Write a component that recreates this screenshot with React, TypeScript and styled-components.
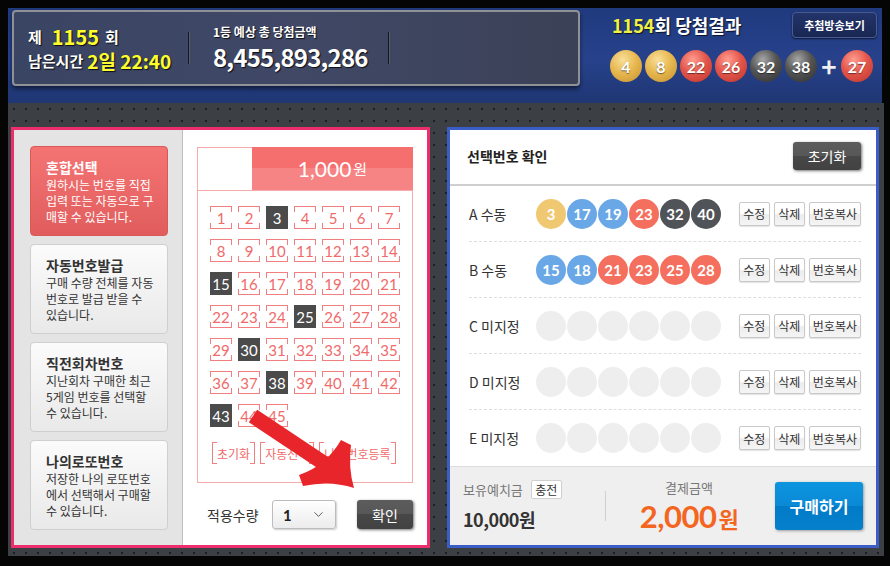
import React from 'react';
import styled, { createGlobalStyle, css } from 'styled-components';
import { ChevronDown } from 'lucide-react';

const KR = `"Noto Sans CJK KR", "Noto Sans", sans-serif`;
const NUM = `Lato, "Noto Sans CJK KR", sans-serif`;

const GlobalStyle = createGlobalStyle`
  html, body {
    margin: 0;
    padding: 0;
    background: #000;
  }
  body {
    font-family: ${KR};
  }
  * {
    box-sizing: border-box;
  }
`;

const Page = styled.div`
  position: relative;
  width: 890px;
  height: 566px;
  background: #050505;
  padding: 8px 0 0 8px;
  overflow: hidden;
`;

/* ---------- top blue band ---------- */

const TopBand = styled.div`
  width: 874px;
  height: 95px;
  display: flex;
  background: linear-gradient(180deg, #203a7e 0%, #27428b 55%, #1f3673 100%);
`;

const InfoPanel = styled.div`
  margin: 2px 0 0 4px;
  width: 568px;
  height: 76px;
  border: 2px solid #8f9194;
  border-radius: 4px;
  background: linear-gradient(90deg, #3a4463 0%, #404866 50%, #3b4156 100%);
  box-shadow: 0 3px 4px rgba(0, 0, 0, 0.5);
  display: flex;
  align-items: center;
  padding-left: 14px;
  color: #fff;
  text-shadow: 1px 1px 1px rgba(0, 0, 0, 0.8);
`;

const RoundBlock = styled.div`
  width: 160px;
  display: flex;
  flex-direction: column;
`;

const InfoLine = styled.div`
  height: 24px;
  display: flex;
  align-items: center;
  font-size: 15px;
  font-weight: 700;
  white-space: nowrap;
`;

const Yellow = styled.span<{ $size: number; $gap?: number }>`
  color: #ffff2e;
  font-size: ${(p) => p.$size}px;
  font-weight: 700;
  margin: 0 6px 0 ${(p) => p.$gap ?? 8}px;
`;

const VDivider = styled.div`
  width: 1px;
  height: 32px;
  background: #15171c;
  box-shadow: 1px 0 0 rgba(255, 255, 255, 0.12);
`;

const PrizeBlock = styled.div`
  width: 199px;
  padding-left: 24px;
  display: flex;
  flex-direction: column;
`;

const PrizeLabel = styled.div`
  font-size: 12px;
  font-weight: 700;
  line-height: 18px;
  white-space: nowrap;
`;

const PrizeAmount = styled.div`
  font-size: 24px;
  font-weight: 700;
  line-height: 32px;
  letter-spacing: -0.8px;
  white-space: nowrap;
`;

const ResultArea = styled.div`
  flex: 1;
  padding: 4px 5px 0 30px;
  display: flex;
  flex-direction: column;
`;

const ResultHead = styled.div`
  display: flex;
  align-items: center;
  justify-content: space-between;
  height: 26px;
`;

const ResultTitle = styled.div`
  font-size: 18px;
  font-weight: 700;
  color: #fff;
  padding-left: 2px;
  text-shadow: 1px 1px 1px rgba(0, 0, 0, 0.7);
  span {
    color: #f0f045;
  }
`;

const BroadcastButton = styled.div`
  width: 85px;
  height: 26px;
  border-radius: 4px;
  border: 1px solid #4a5a92;
  background: linear-gradient(#22336a, #192752);
  box-shadow: 0 1px 2px rgba(0, 0, 0, 0.6);
  color: #fff;
  font-size: 11px;
  font-weight: 700;
  display: flex;
  align-items: center;
  justify-content: center;
`;

const WinBalls = styled.div`
  margin-top: 12px;
  display: flex;
  align-items: center;
  gap: 3px;
`;

type Tone = 'gold' | 'red' | 'dark' | 'blue' | 'empty';

const glossy: Record<string, string> = {
  gold: 'radial-gradient(circle at 40% 30%, #f8df9a 0%, #e8b850 45%, #c4912e 100%)',
  red: 'radial-gradient(circle at 40% 30%, #ff9d90 0%, #e4564b 45%, #bb342d 100%)',
  dark: 'radial-gradient(circle at 40% 30%, #a6a6a6 0%, #555 45%, #2e2e2e 100%)',
};

const WinBall = styled.div<{ $tone: Tone }>`
  width: 32px;
  height: 32px;
  border-radius: 50%;
  background: ${(p) => glossy[p.$tone]};
  color: #fff;
  font-family: ${NUM};
  font-weight: 700;
  font-size: 16px;
  display: flex;
  align-items: center;
  justify-content: center;
  text-shadow: 0 1px 1px rgba(0, 0, 0, 0.5);
`;

const Plus = styled.div`
  width: 16px;
  color: #f0f0f0;
  font-size: 26px;
  font-weight: 700;
  line-height: 32px;
  text-align: center;
  margin: 0 1px;
`;

/* ---------- dotted work area ---------- */

const WorkArea = styled.div`
  width: 876px;
  height: 453px;
  background-color: #3c3f44;
  background-image: radial-gradient(circle, #1d1f22 1px, transparent 1.6px);
  background-size: 12px 12px;
  padding: 24px 0 0 3px;
  display: flex;
  gap: 17px;
`;

const PickPanel = styled.div`
  width: 419px;
  height: 421px;
  border: 3px solid #ec2f6c;
  display: flex;
  background: #fff;
`;

const SideMenu = styled.div`
  width: 169px;
  background: #e4e4e4;
  border-right: 1px solid #bdbdbd;
  padding: 16px 0 0 16px;
  display: flex;
  flex-direction: column;
  gap: 8px;
`;

const MenuCard = styled.div<{ $active?: boolean }>`
  width: 138px;
  height: 90px;
  border-radius: 4px;
  padding: 10px 0 0 15px;
  border: 1px solid #cfcfcf;
  background: linear-gradient(#fbfbfb, #e9e9e9);
  color: #333;
  ${(p) =>
    p.$active &&
    css`
      border-color: #d95858;
      background: linear-gradient(#f47474, #e15d5d);
      color: #fff;
    `}
`;

const MenuTitle = styled.div`
  font-size: 14px;
  font-weight: 700;
  line-height: 20px;
`;

const MenuDesc = styled.div`
  font-size: 12px;
  line-height: 16px;
  white-space: nowrap;
`;

const PickBody = styled.div`
  flex: 1;
  padding: 17px 14px 0 14px;
  display: flex;
  flex-direction: column;
`;

const NumberBoard = styled.div`
  width: 216px;
  height: 336px;
  border: 1px solid #f6aaaa;
  display: flex;
  flex-direction: column;
`;

const BoardHead = styled.div`
  height: 43px;
  display: flex;
  border-bottom: 1px solid #f6aaaa;
`;

const BoardBlank = styled.div`
  width: 54px;
`;

const Price = styled.div`
  flex: 1;
  margin: -1px -1px 0 0;
  background: linear-gradient(#f56f6f 0%, #f56f6f 50%, #f78484 50%, #f78484 100%);
  color: #fff;
  display: flex;
  align-items: center;
  justify-content: center;
  font-family: ${NUM};
  font-size: 21px;
  span {
    font-family: ${KR};
    font-size: 15px;
    margin-left: 2px;
  }
`;

const Grid = styled.div`
  padding: 15px 0 0 12px;
  display: grid;
  grid-template-columns: repeat(7, 22px);
  grid-auto-rows: 23px;
  column-gap: 6px;
  row-gap: 10px;
`;

const pinkLine = '#f27f7f';

const NumCell = styled.div<{ $on?: boolean }>`
  display: flex;
  align-items: center;
  justify-content: center;
  font-family: ${NUM};
  font-size: 15px;
  color: #f06a6a;
  border-top: 1px solid ${pinkLine};
  border-bottom: 1px solid ${pinkLine};
  background:
    linear-gradient(${pinkLine}, ${pinkLine}) left top / 1px 5px no-repeat,
    linear-gradient(${pinkLine}, ${pinkLine}) right top / 1px 5px no-repeat,
    linear-gradient(${pinkLine}, ${pinkLine}) left bottom / 1px 5px no-repeat,
    linear-gradient(${pinkLine}, ${pinkLine}) right bottom / 1px 5px no-repeat,
    #fff;
  ${(p) =>
    p.$on &&
    css`
      background: #4b4b4b;
      border-color: #4b4b4b;
      color: #fff;
    `}
`;

const BoardActions = styled.div`
  margin: 15px 0 0 14px;
  display: flex;
  gap: 5px;
`;

const BracketButton = styled.div`
  height: 22px;
  padding: 0 4px;
  display: flex;
  align-items: center;
  font-size: 12px;
  color: #f06a6a;
  border-left: 1px solid ${pinkLine};
  border-right: 1px solid ${pinkLine};
  background:
    linear-gradient(${pinkLine}, ${pinkLine}) left top / 4px 1px no-repeat,
    linear-gradient(${pinkLine}, ${pinkLine}) right top / 4px 1px no-repeat,
    linear-gradient(${pinkLine}, ${pinkLine}) left bottom / 4px 1px no-repeat,
    linear-gradient(${pinkLine}, ${pinkLine}) right bottom / 4px 1px no-repeat;
`;

const ApplyRow = styled.div`
  margin-top: 17px;
  height: 29px;
  display: flex;
  align-items: center;
  padding-left: 10px;
`;

const ApplyLabel = styled.div`
  width: 65px;
  font-size: 14px;
  color: #333;
`;

const Select = styled.div`
  width: 64px;
  height: 29px;
  border: 1px solid #bcbcbc;
  border-radius: 3px;
  background: linear-gradient(#fff, #ececec);
  box-shadow: 1px 1px 2px rgba(0, 0, 0, 0.2);
  display: flex;
  align-items: center;
  justify-content: space-between;
  padding: 0 9px 0 10px;
  font-family: ${NUM};
  font-weight: 700;
  font-size: 15px;
  color: #222;
`;

const DarkButton = styled.div<{ $w: number; $h: number }>`
  width: ${(p) => p.$w}px;
  height: ${(p) => p.$h}px;
  border-radius: 3px;
  background: linear-gradient(#5c5c5c 0%, #575757 50%, #474747 50%, #424242 100%);
  box-shadow: 1px 1px 3px rgba(0, 0, 0, 0.55);
  color: #fff;
  font-size: 14px;
  display: flex;
  align-items: center;
  justify-content: center;
`;

/* ---------- right panel ---------- */

const ConfirmPanel = styled.div`
  width: 432px;
  height: 421px;
  border: 3px solid #3b5ec6;
  background: #fff;
  display: flex;
  flex-direction: column;
`;

const ConfirmHead = styled.div`
  height: 56px;
  border-bottom: 2px solid #cfcfcf;
  display: flex;
  align-items: center;
  justify-content: space-between;
  padding: 0 15px 2px 17px;
`;

const ConfirmTitle = styled.div`
  font-size: 14px;
  font-weight: 700;
  color: #222;
`;

const Slots = styled.div`
  padding: 0 15px 0 19px;
`;

const Slot = styled.div`
  height: 56px;
  display: flex;
  align-items: center;
  border-bottom: 1px dashed #dedede;
  &:last-child {
    border-bottom: none;
  }
`;

const SlotLabel = styled.div`
  width: 67px;
  font-size: 14px;
  color: #333;
  white-space: nowrap;
`;

const SlotBalls = styled.div`
  display: flex;
  gap: 1px;
`;

const flat: Record<string, string> = {
  gold: '#f1c872',
  blue: '#69a7e6',
  red: '#f56f5e',
  dark: '#505357',
  empty: '#eeeeee',
};

const PickBall = styled.div<{ $tone: Tone }>`
  width: 30px;
  height: 30px;
  border-radius: 50%;
  background: ${(p) => flat[p.$tone]};
  color: #fff;
  font-family: ${NUM};
  font-weight: 700;
  font-size: 15px;
  display: flex;
  align-items: center;
  justify-content: center;
`;

const SlotButtons = styled.div`
  margin-left: auto;
  display: flex;
  gap: 4px;
`;

const SmallButton = styled.div`
  height: 24px;
  padding: 0 3px;
  min-width: 31px;
  border: 1px solid #c9c9c9;
  border-radius: 2px;
  background: linear-gradient(#fff 0%, #fff 45%, #ececec 55%, #f5f5f5 100%);
  box-shadow: 0 1px 1px rgba(0, 0, 0, 0.12);
  font-size: 12px;
  color: #333;
  display: flex;
  align-items: center;
  justify-content: center;
  white-space: nowrap;
`;

const PayBar = styled.div`
  margin-top: auto;
  height: 79px;
  border-top: 1px solid #dcdcdc;
  background: #efefef;
  display: flex;
  align-items: center;
  padding: 0 13px;
`;

const Balance = styled.div`
  width: 142px;
  display: flex;
  flex-direction: column;
  gap: 7px;
`;

const Muted = styled.div`
  font-size: 13px;
  line-height: 18px;
  color: #777;
  display: flex;
  align-items: center;
  white-space: nowrap;
`;

const ChargeButton = styled.div`
  margin-left: 8px;
  width: 31px;
  height: 19px;
  border: 1px solid #cfcfcf;
  border-radius: 2px;
  background: #fff;
  font-size: 12px;
  color: #333;
  display: flex;
  align-items: center;
  justify-content: center;
`;

const BalanceAmount = styled.div`
  font-size: 18px;
  font-weight: 700;
  color: #333;
  letter-spacing: -0.5px;
`;

const PayDivider = styled.div`
  width: 1px;
  height: 30px;
  background: #d0d0d0;
`;

const PayTotal = styled.div`
  width: 166px;
  display: flex;
  flex-direction: column;
  align-items: center;
  gap: 4px;
`;

const TotalAmount = styled.div`
  color: #f3661f;
  font-family: ${NUM};
  font-weight: 700;
  font-size: 31px;
  line-height: 30px;
  letter-spacing: -0.5px;
  span {
    font-family: ${KR};
    font-size: 22px;
    margin-left: 2px;
  }
`;

const BuyButton = styled.div`
  margin-left: 3px;
  width: 88px;
  height: 48px;
  border-radius: 3px;
  background: linear-gradient(#0d95e0 0%, #0a89d5 50%, #017ac7 50%, #0780cc 100%);
  box-shadow: 1px 1px 3px rgba(0, 0, 0, 0.35);
  color: #fff;
  font-size: 16px;
  font-weight: 700;
  display: flex;
  align-items: center;
  justify-content: center;
`;

const ArrowLayer = styled.svg`
  position: absolute;
  left: 0;
  top: 0;
  pointer-events: none;
`;

const menus = [
  { title: '혼합선택', lines: ['원하시는 번호를 직접', '입력 또는 자동으로 구', '매할 수 있습니다.'], active: true },
  { title: '자동번호발급', lines: ['구매 수량 전체를 자동', '번호로 발급 받을 수', '있습니다.'] },
  { title: '직전회차번호', lines: ['지난회차 구매한 최근', '5게임 번호를 선택할', '수 있습니다.'] },
  { title: '나의로또번호', lines: ['저장한 나의 로또번호', '에서 선택해서 구매할', '수 있습니다.'] },
];

const picked = [3, 15, 25, 30, 38, 43];

const toneOf = (n: number): Tone => {
  if (n <= 10) return 'gold';
  if (n <= 20) return 'blue';
  if (n <= 30) return 'red';
  return 'dark';
};

const slots: { label: string; nums: number[] }[] = [
  { label: 'A 수동', nums: [3, 17, 19, 23, 32, 40] },
  { label: 'B 수동', nums: [15, 18, 21, 23, 25, 28] },
  { label: 'C 미지정', nums: [] },
  { label: 'D 미지정', nums: [] },
  { label: 'E 미지정', nums: [] },
];

export default function App() {
  return (
    <Page>
      <GlobalStyle />
      <TopBand>
        <InfoPanel>
          <RoundBlock>
            <InfoLine>
              제<Yellow $size={20} $gap={10}>1155</Yellow>회
            </InfoLine>
            <InfoLine>
              남은시간<Yellow $size={19} $gap={4}>2일 22:40</Yellow>
            </InfoLine>
          </RoundBlock>
          <VDivider />
          <PrizeBlock>
            <PrizeLabel>1등 예상 총 당첨금액</PrizeLabel>
            <PrizeAmount>8,455,893,286</PrizeAmount>
          </PrizeBlock>
          <VDivider />
        </InfoPanel>
        <ResultArea>
          <ResultHead>
            <ResultTitle>
              <span>1154</span>회 당첨결과
            </ResultTitle>
            <BroadcastButton>추첨방송보기</BroadcastButton>
          </ResultHead>
          <WinBalls>
            <WinBall $tone="gold">4</WinBall>
            <WinBall $tone="gold">8</WinBall>
            <WinBall $tone="red">22</WinBall>
            <WinBall $tone="red">26</WinBall>
            <WinBall $tone="dark">32</WinBall>
            <WinBall $tone="dark">38</WinBall>
            <Plus>+</Plus>
            <WinBall $tone="red">27</WinBall>
          </WinBalls>
        </ResultArea>
      </TopBand>

      <WorkArea>
        <PickPanel>
          <SideMenu>
            {menus.map((m) => (
              <MenuCard key={m.title} $active={m.active}>
                <MenuTitle>{m.title}</MenuTitle>
                <MenuDesc>
                  {m.lines.map((l) => (
                    <div key={l}>{l}</div>
                  ))}
                </MenuDesc>
              </MenuCard>
            ))}
          </SideMenu>
          <PickBody>
            <NumberBoard>
              <BoardHead>
                <BoardBlank />
                <Price>
                  1,000<span>원</span>
                </Price>
              </BoardHead>
              <Grid>
                {Array.from({ length: 45 }, (_, i) => i + 1).map((n) => (
                  <NumCell key={n} $on={picked.includes(n)}>
                    {n}
                  </NumCell>
                ))}
              </Grid>
              <BoardActions>
                <BracketButton>초기화</BracketButton>
                <BracketButton>자동선택</BracketButton>
                <BracketButton>나의번호등록</BracketButton>
              </BoardActions>
            </NumberBoard>
            <ApplyRow>
              <ApplyLabel>적용수량</ApplyLabel>
              <Select>
                1
                <ChevronDown size={15} strokeWidth={1.5} color="#555" />
              </Select>
              <DarkButton $w={56} $h={29} style={{ marginLeft: 21 }}>
                확인
              </DarkButton>
            </ApplyRow>
          </PickBody>
        </PickPanel>

        <ConfirmPanel>
          <ConfirmHead>
            <ConfirmTitle>선택번호 확인</ConfirmTitle>
            <DarkButton $w={68} $h={28}>
              초기화
            </DarkButton>
          </ConfirmHead>
          <Slots>
            {slots.map((s) => (
              <Slot key={s.label}>
                <SlotLabel>{s.label}</SlotLabel>
                <SlotBalls>
                  {(s.nums.length ? s.nums : [0, 0, 0, 0, 0, 0]).map((n, i) => (
                    <PickBall key={i} $tone={n ? toneOf(n) : 'empty'}>
                      {n || ''}
                    </PickBall>
                  ))}
                </SlotBalls>
                <SlotButtons>
                  <SmallButton>수정</SmallButton>
                  <SmallButton>삭제</SmallButton>
                  <SmallButton>번호복사</SmallButton>
                </SlotButtons>
              </Slot>
            ))}
          </Slots>
          <PayBar>
            <Balance>
              <Muted>
                보유예치금<ChargeButton>충전</ChargeButton>
              </Muted>
              <BalanceAmount>10,000원</BalanceAmount>
            </Balance>
            <PayDivider />
            <PayTotal>
              <Muted>결제금액</Muted>
              <TotalAmount>
                2,000<span>원</span>
              </TotalAmount>
            </PayTotal>
            <BuyButton>구매하기</BuyButton>
          </PayBar>
        </ConfirmPanel>
      </WorkArea>

      <ArrowLayer width={890} height={566}>
        <line x1={253} y1={416} x2={334} y2={470} stroke="#e8252a" strokeWidth={15} />
        <path d="M299 475 Q326 466 341 440 L351 445 Q348 468 354 488 Q330 480 303 486 Z" fill="#e8252a" />
      </ArrowLayer>
    </Page>
  );
}
